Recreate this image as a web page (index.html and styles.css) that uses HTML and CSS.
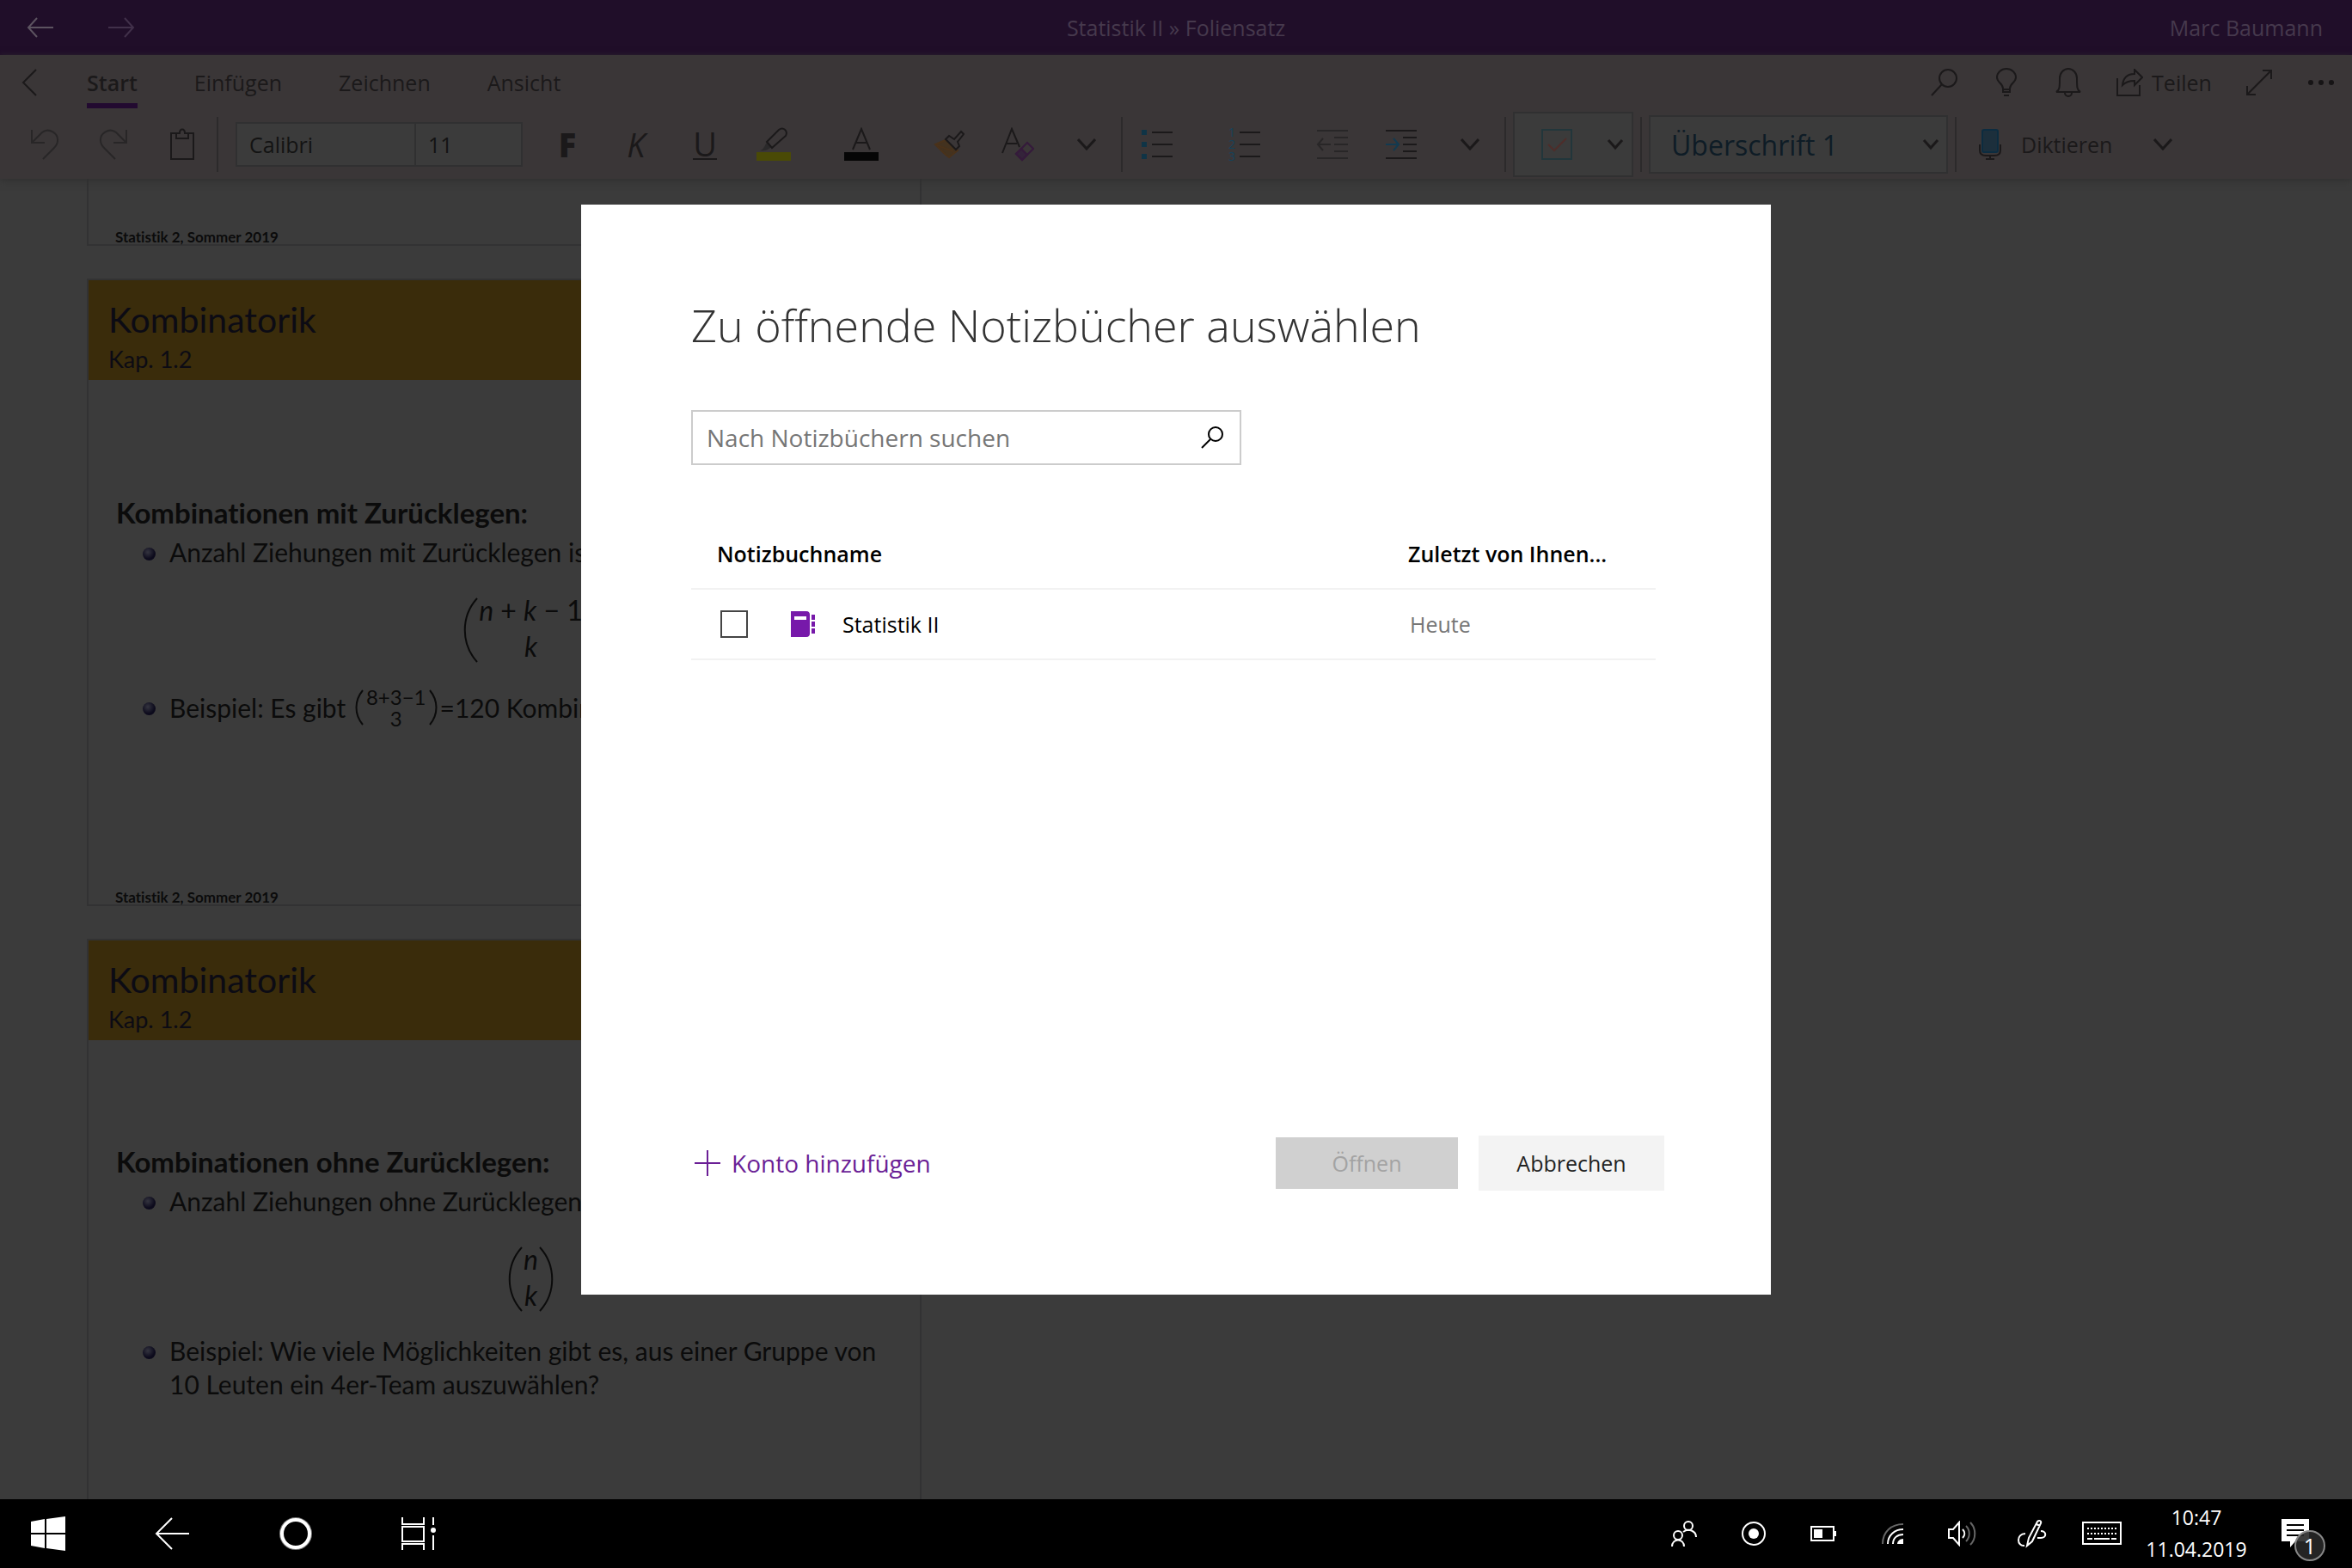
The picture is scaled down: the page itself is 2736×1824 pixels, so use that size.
FILE: index.html
```html
<!DOCTYPE html>
<html lang="de">
	<head>
		<meta charset="UTF-8">
		<meta name="viewport" content="width=device-width, initial-scale=1">
		<title>Statistik II » Foliensatz</title>
		<link rel="stylesheet" href="styles.css">
	</head>
	<body>
		<div class="app">
			<header class="titlebar">
				<div class="nav">
					<button aria-label="Zurück"><svg width="32" height="24" viewBox="0 0 32 24"><path d="M31 12H2M12 1L2 12l10 11" stroke="#5c5360"/></svg></button>
					<button aria-label="Vorwärts"><svg width="32" height="24" viewBox="0 0 32 24"><path d="M1 12h29M20 1l10 11-10 11" stroke="#41304a"/></svg></button>
				</div>
				<div class="doc-title">Statistik II » Foliensatz</div>
				<div class="user">Marc Baumann</div>
			</header>

			<div class="ribbon">
				<div class="tabs">
					<button class="tab-back" aria-label="Menü"><svg width="20" height="32" viewBox="0 0 20 32"><path d="M18 1L3 16l15 15"/></svg></button>
					<button class="tab active">Start</button>
					<button class="tab">Einfügen</button>
					<button class="tab">Zeichnen</button>
					<button class="tab">Ansicht</button>
					<div class="actions">
						<button class="act" aria-label="Suchen"><svg width="32" height="32" viewBox="0 0 32 32"><circle cx="20" cy="11" r="10"/><path d="M13 18L1 31"/></svg></button>
						<button class="act" aria-label="Tipps"><svg width="24" height="34" viewBox="0 0 24 34"><path d="M8 24c0-6-7-7-7-13a11 10 0 0 1 22 0c0 6-7 7-7 13v4H8zM8 25h8M9 32h6"/></svg></button>
						<button class="act" aria-label="Benachrichtigungen"><svg width="30" height="34" viewBox="0 0 30 34"><path d="M1 28h28c-4-2-4-6-4-16a10 11 0 0 0-20 0c0 10 0 14-4 16zM11 29a4 4 0 0 0 8 0"/></svg></button>
						<button class="act share"><svg width="32" height="32" viewBox="0 0 32 32"><path d="M2 11v20h26V19M8 19c1-9 6-13 14-13V1l9 9-9 9v-5c-6 0-10 1-14 5z"/></svg>Teilen</button>
						<button class="act" aria-label="Vollbild"><svg width="32" height="32" viewBox="0 0 32 32"><path d="M2 30L30 2M20 2h10v10M2 20v10h10"/></svg></button>
						<button class="act" aria-label="Mehr"><svg width="32" height="8" viewBox="0 0 32 8"><g fill="#161415" stroke="none"><circle cx="4" cy="4" r="3"/><circle cx="16" cy="4" r="3"/><circle cx="28" cy="4" r="3"/></g></svg></button>
					</div>
				</div>

				<div class="tools">
					<button class="tool" aria-label="Rückgängig"><svg class="dim" width="36" height="38" viewBox="0 0 36 38"><path d="M3 2v15h15M3 17L15 5c8-6 19 1 18 10 0 4-3 7-5 9L16 36"/></svg></button>
					<button class="tool" aria-label="Wiederholen"><svg class="dim" width="36" height="38" viewBox="0 0 36 38"><path d="M33 2v15H18M33 17L21 5C13-1 2 6 3 15c0 4 3 7 5 9l12 12"/></svg></button>
					<button class="tool" aria-label="Einfügen"><svg width="30" height="38" viewBox="0 0 30 38"><path d="M8 6H2v30h26V6h-6M8 6h4c0-6 6-6 6 0h4v6H8z"/></svg></button>
					<span class="sep"></span>
					<div class="fontbox">
						<input class="font-name" type="text" value="Calibri" aria-label="Schriftart">
						<input class="font-size" type="text" value="11" aria-label="Schriftgrad">
					</div>
					<button class="tool fmt bold">F</button>
					<button class="tool fmt italic">K</button>
					<button class="tool fmt"><span class="under">U</span></button>
					<button class="tool" aria-label="Hervorheben"><svg width="40" height="40" viewBox="0 0 40 40"><path d="M0 29h40v10H0z" fill="#4a4a06" stroke="none"/><path d="M4 27c5-1 5-6 8-9l5 5c-3 3-7 5-13 4z" fill="#2a292a" stroke="none"/><path d="M12 17L26 3c5-4 11 1 8 7L18 24z"/></svg></button>
					<button class="tool wide" aria-label="Schriftfarbe"><svg width="40" height="40" viewBox="0 0 40 40"><path d="M0 29h40v10H0z" fill="#060606" stroke="none"/><path d="M10 26L20 2l10 24M13 18h14"/></svg></button>
					<button class="tool" aria-label="Format übertragen"><svg width="36" height="36" viewBox="0 0 36 36"><path d="M2 18l12-5 14 12-10 8c-5-3-8-7-16-15z" fill="#43321f" stroke="#4a321a"/><path d="M4 19l19 7" stroke="#4a321a"/><path d="M14 12l4-4 6 4 8-9 3 3-7 9 2 5-4 4z" fill="#3a3637"/></svg></button>
					<button class="tool" aria-label="Formatierung löschen"><svg width="38" height="40" viewBox="0 0 38 40"><path d="M1 30L12 2l9 21M5 19h13"/><path d="M17 31L30 18l7 7-13 13z" stroke="#351a3b"/><path d="M17 31l6-6 7 7-6 6z" fill="#34233a" stroke="#351a3b"/></svg></button>
					<button class="tool" aria-label="Weitere Schriftoptionen"><svg class="chev" width="22" height="14" viewBox="0 0 22 14"><path d="M1 1l10 11L21 1"/></svg></button>
					<span class="sep"></span>
					<button class="tool" aria-label="Aufzählung"><svg width="38" height="36" viewBox="0 0 38 36"><path d="M1 1h6v6H1zM1 15h6v6H1zM1 29h6v6H1z" fill="#0f3446" stroke="none"/><path d="M13 4h24M13 18h24M13 32h24"/></svg></button>
					<button class="tool wide" aria-label="Nummerierung">
						<span class="digits"><span>1</span><span>2</span><span>3</span></span>
						<svg width="25" height="36" viewBox="0 0 25 36"><path d="M0 4h24M0 18h24M0 32h24"/></svg>
					</button>
					<button class="tool" aria-label="Einzug verkleinern"><svg class="dim" width="38" height="36" viewBox="0 0 38 36"><path d="M1 2h36M21 10h16M21 18h16M21 26h16M1 34h36M17 18H2M8 11l-6 7 6 7"/></svg></button>
					<button class="tool" aria-label="Einzug vergrößern"><svg width="38" height="36" viewBox="0 0 38 36"><path d="M1 2h36M21 10h16M21 18h16M21 26h16M1 34h36"/><path d="M1 18h15M10 11l6 7-6 7" stroke="#123a50"/></svg></button>
					<button class="tool" aria-label="Weitere Absatzoptionen"><svg class="chev" width="22" height="14" viewBox="0 0 22 14"><path d="M1 1l10 11L21 1"/></svg></button>
					<span class="sep"></span>
					<div class="tagbox">
						<button class="tag" aria-label="Aufgabe"><svg width="36" height="36" viewBox="0 0 36 36"><path d="M1 1h34v34H1z" stroke="#22363b"/><path d="M8 18l7 7L29 11" stroke="#4e2d2a"/></svg></button>
						<button class="tag-more" aria-label="Weitere Kategorien"><svg class="chev" width="20" height="14" viewBox="0 0 20 14"><path d="M2 2l8 9 8-9"/></svg></button>
					</div>
					<span class="sep"></span>
					<div class="stylebox">
						<select aria-label="Formatvorlage"><option>Überschrift 1</option></select>
						<svg class="chev" width="20" height="14" viewBox="0 0 20 14"><path d="M2 2l8 9 8-9"/></svg>
					</div>
					<span class="sep"></span>
					<button class="tool dictate"><svg width="28" height="38" viewBox="0 0 28 38"><path d="M2 19v7c0 4 3 6 7 6h10c4 0 7-2 7-6v-7M14 32v4M9 36h10"/><rect x="5" y="2" width="18" height="26" rx="2" fill="#1c2f3c" stroke="#0c2c40"/></svg>Diktieren</button>
					<button class="tool" aria-label="Diktieroptionen"><svg class="chev" width="22" height="14" viewBox="0 0 22 14"><path d="M1 1l10 11L21 1"/></svg></button>
				</div>
			</div>

			<main class="canvas">
				<section class="slide slide-tail">
					<p class="slide-foot">Statistik 2, Sommer 2019</p>
				</section>

				<section class="slide">
					<header class="slide-head">
						<h2>Kombinatorik</h2>
						<p>Kap. 1.2</p>
					</header>
					<div class="slide-body">
						<h3>Kombinationen mit Zurücklegen:</h3>
						<ul>
							<li>Anzahl Ziehungen mit Zurücklegen ist
								<div class="formula">
									<svg width="18" height="76" viewBox="0 0 18 76"><path d="M16 1C-3 22-3 54 16 75"/></svg>
									<div class="binom"><span><i>n</i> + <i>k</i> − 1</span><i>k</i></div>
									<svg width="18" height="76" viewBox="0 0 18 76"><path d="M2 1c19 21 19 53 0 74"/></svg>
								</div>
							</li>
							<li class="inline-row">Beispiel: Es gibt&nbsp;
								<svg width="12" height="44" viewBox="0 0 12 44"><path d="M10 2C0 14 0 30 10 42"/></svg>
								<div class="binom small"><span>8+3−1</span><span>3</span></div>
								<svg width="12" height="44" viewBox="0 0 12 44"><path d="M2 2c10 12 10 28 0 40"/></svg>=120 Kombinationen</li>
						</ul>
					</div>
					<p class="slide-foot">Statistik 2, Sommer 2019</p>
				</section>

				<section class="slide">
					<header class="slide-head">
						<h2>Kombinatorik</h2>
						<p>Kap. 1.2</p>
					</header>
					<div class="slide-body">
						<h3>Kombinationen ohne Zurücklegen:</h3>
						<ul>
							<li>Anzahl Ziehungen ohne Zurücklegen
								<div class="formula">
									<svg width="18" height="76" viewBox="0 0 18 76"><path d="M16 1C-3 22-3 54 16 75"/></svg>
									<div class="binom"><i>n</i><i>k</i></div>
									<svg width="18" height="76" viewBox="0 0 18 76"><path d="M2 1c19 21 19 53 0 74"/></svg>
								</div>
							</li>
							<li>Beispiel: Wie viele Möglichkeiten gibt es, aus einer Gruppe von<br>10 Leuten ein 4er-Team auszuwählen?</li>
						</ul>
					</div>
				</section>
			</main>

			<div class="dialog" role="dialog" aria-labelledby="dlg-title">
				<h1 id="dlg-title">Zu öffnende Notizbücher auswählen</h1>
				<div class="search">
					<input type="text" placeholder="Nach Notizbüchern suchen" aria-label="Nach Notizbüchern suchen">
					<button aria-label="Suchen"><svg width="26" height="26" viewBox="0 0 26 26"><circle cx="17" cy="9" r="8"/><path d="M11 15L1 25"/></svg></button>
				</div>
				<table>
					<colgroup>
						<col class="col-check">
						<col class="col-icon">
						<col>
						<col class="col-date">
					</colgroup>
					<thead>
						<tr>
							<th colspan="3">Notizbuchname</th>
							<th>Zuletzt von Ihnen...</th>
						</tr>
					</thead>
					<tbody>
						<tr>
							<td class="check"><input type="checkbox" id="nb1"></td>
							<td class="icon"><svg width="28" height="30" viewBox="0 0 28 30"><path d="M0 0h18c3 0 4 2 4 4v22c0 2-1 4-4 4H0z"/><path d="M24 4h4v6h-4zM24 12h4v6h-4zM24 20h4v6h-4z"/><path d="M4 6h14v4H4z" fill="#fff"/></svg></td>
							<td><label for="nb1">Statistik II</label></td>
							<td class="date">Heute</td>
						</tr>
					</tbody>
				</table>
				<div class="dialog-foot">
					<a class="add" href="#"><svg width="32" height="32" viewBox="0 0 32 32"><path d="M1 16h30M16 1v30"/></svg>Konto hinzufügen</a>
					<button class="btn open" disabled>Öffnen</button>
					<button class="btn cancel">Abbrechen</button>
				</div>
			</div>
		</div>

		<footer class="taskbar">
			<button class="task" aria-label="Start"><svg width="40" height="40" viewBox="0 0 40 40"><path d="M0 6l16-3v16H0zM18 3l22-3v19H18zM0 21h16v16L0 34zM18 21h22v19l-22-3z" fill="#fff" stroke="none"/></svg></button>
			<button class="task" aria-label="Zurück"><svg width="40" height="40" viewBox="0 0 40 40"><path d="M40 20H2M20 2L2 20l18 18"/></svg></button>
			<button class="task" aria-label="Cortana"><svg width="40" height="40" viewBox="0 0 40 40"><circle cx="20" cy="20" r="18" stroke="#777"/><circle cx="20" cy="20" r="16" stroke-width="4"/></svg></button>
			<button class="task" aria-label="Taskansicht"><svg width="42" height="40" viewBox="0 0 42 40"><path d="M1 1v8h25V1M1 12h25v17H1zM1 39v-7h25v7M37 1v9M37 22v17"/><circle cx="37" cy="16" r="3" fill="#fff" stroke="none"/></svg></button>
			<div class="tray">
				<button aria-label="Kontakte"><svg width="30" height="32" viewBox="0 0 30 32"><circle cx="20" cy="7" r="5"/><circle cx="8" cy="18" r="5"/><path d="M1 31c0-10 14-10 14 0M14 14c6-5 15-1 15 6"/></svg></button>
				<button aria-label="Aufnahme"><svg width="30" height="30" viewBox="0 0 30 30"><circle cx="15" cy="15" r="13"/><circle cx="15" cy="15" r="6" fill="#fff" stroke="none"/></svg></button>
				<button aria-label="Akku"><svg width="30" height="18" viewBox="0 0 30 18"><path d="M1 1h26v16H1zM29 6v6"/><path d="M4 4h10v10H4z" fill="#fff" stroke="none"/></svg></button>
				<button aria-label="WLAN"><svg width="26" height="26" viewBox="0 0 26 26"><path d="M1 25C1 11 11 2 25 2" stroke="#666"/><path d="M7 25C7 15 15 8 25 8M13 25c0-7 5-11 12-11"/><path d="M18 25c0-3 3-6 7-6v6z" fill="#fff" stroke="none"/></svg></button>
				<button aria-label="Lautstärke"><svg width="34" height="30" viewBox="0 0 34 30"><path d="M1 10h5l7-8v26l-7-8H1zM17 10c3 3 3 7 0 10"/><path d="M21 6c5 5 5 13 0 18M26 2c7 7 7 19 0 26" stroke="#666"/></svg></button>
				<button aria-label="Stift"><svg width="34" height="34" viewBox="0 0 34 34"><path d="M11 31l2-9L23 3c2-2 5-1 4 2L17 26zM22 6l4 2M9 17c-11 0-10 15-1 14M27 14c7 0 7 8 0 8h-4"/></svg></button>
				<button aria-label="Bildschirmtastatur"><svg width="46" height="28" viewBox="0 0 46 28"><path d="M1 1h44v25H1z"/><path d="M6 8h34M6 14h34" stroke-dasharray="2 2"/><path d="M6 20h6M14 20h18M34 20h6"/></svg></button>
				<div class="clock"><time>10:47</time><time>11.04.2019</time></div>
				<button class="notify" aria-label="Info-Center"><svg width="32" height="34" viewBox="0 0 32 34"><path d="M0 0h32v26H16l-6 7v-7H0z" fill="#fff" stroke="none"/><path d="M6 7h20M6 13h20M6 19h20" stroke="#000"/></svg><span class="badge">1</span></button>
			</div>
		</footer>
	</body>
</html>
```
FILE: styles.css
```css
* {
	box-sizing: border-box;
}
body {
	margin: 0;
	height: 100vh;
	display: flex;
	flex-direction: column;
	overflow: hidden;
	background-color: #000;
	font-family: "Open Sans", "Noto Sans", sans-serif;
	font-size: 25px;
}
button, input, select {
	font: inherit;
	color: inherit;
	background: none;
	border: none;
	border-radius: 0;
	padding: 0;
	margin: 0;
}
h1, h2, h3, p, ul {
	margin: 0;
	padding: 0;
	font-weight: normal;
}
svg {
	display: block;
	flex: none;
	fill: none;
	stroke: currentColor;
	stroke-width: 2;
}
.app {
	position: relative;
	flex: 1;
	min-height: 0;
	display: flex;
	flex-direction: column;
	background-color: #3b3b3b;
}

/* title bar */
.titlebar {
	display: grid;
	grid-template-columns: 1fr auto 1fr;
	align-items: center;
	height: 64px;
	background-color: #200e29;
	color: #46394d;
}
.nav {
	display: flex;
}
.nav button {
	display: grid;
	place-items: center;
	width: 94px;
	height: 64px;
}
.user {
	text-align: right;
	padding-right: 34px;
}

/* ribbon */
.ribbon {
	background-color: #3a3637;
	color: #1b191a;
	box-shadow: 0 2px 8px #303030;
	z-index: 1;
}
.tabs {
	display: flex;
	height: 64px;
}
.tab-back {
	display: grid;
	place-items: center;
	width: 68px;
}
.tab {
	position: relative;
	padding: 0 33px;
}
.tab.active {
	font-weight: 600;
}
.tab.active::after {
	content: "";
	position: absolute;
	left: 33px;
	right: 33px;
	bottom: 2px;
	height: 6px;
	background-color: #220a30;
}
.actions {
	display: flex;
	margin-left: auto;
}
.act {
	display: flex;
	align-items: center;
	justify-content: center;
	gap: 10px;
	width: 72px;
}
.share {
	width: 150px;
}
.tools {
	display: flex;
	align-items: center;
	height: 80px;
	padding-left: 12px;
}
.tool {
	display: flex;
	align-items: center;
	justify-content: center;
	flex: none;
	width: 80px;
	height: 80px;
}
.tool.wide {
	width: 124px;
}
.digits {
	display: flex;
	flex-direction: column;
	width: 13px;
	color: #15425a;
	font-size: 14px;
	line-height: 14px;
	text-align: left;
}
.dim {
	color: #282627;
}
.chev {
	stroke-width: 3;
}
.sep {
	flex: none;
	width: 2px;
	height: 64px;
	background-color: #2c2a2b;
}
.fontbox {
	display: flex;
	width: 334px;
	height: 52px;
	margin: 0 12px 0 20px;
	border: 2px solid #303031;
	background-color: #3b3b3b;
	color: #131313;
}
.font-name {
	width: 208px;
	padding-left: 14px;
	border-right: 2px solid #303031;
}
.font-size {
	flex: 1;
	min-width: 0;
	padding-left: 14px;
}
.fmt {
	font-size: 38px;
	line-height: 40px;
}
.bold {
	font-weight: 800;
}
.italic {
	font-style: italic;
}
.under {
	line-height: 34px;
	border-bottom: 2px solid #1b191a;
}
.tagbox, .stylebox {
	display: flex;
	align-items: center;
	flex: none;
	margin: 0 8px;
	border: 2px solid #303031;
	background-color: #3b3b3b;
}
.tagbox {
	width: 140px;
	height: 76px;
}
.tag, .tag-more {
	display: grid;
	place-items: center;
	width: 98px;
}
.tag-more {
	width: 38px;
}
.stylebox {
	position: relative;
	width: 348px;
	height: 68px;
	color: #0e1c26;
	font-size: 32px;
}
.stylebox select {
	appearance: none;
	width: 100%;
	height: 100%;
	padding-left: 24px;
}
.stylebox svg {
	position: absolute;
	right: 8px;
	color: #1b191a;
}
.dictate {
	justify-content: flex-start;
	width: 200px;
	padding-left: 25px;
	gap: 22px;
}

/* slides on the notebook page */
.canvas {
	flex: 1;
	min-height: 0;
	overflow: hidden;
	padding-left: 101px;
	font-family: Lato, sans-serif;
	font-variant-ligatures: none;
	color: #0b0b0b;
}
.slide {
	display: flex;
	flex-direction: column;
	width: 971px;
	height: 730px;
	margin-bottom: 38px;
	border: 2px solid #323233;
}
.slide-tail {
	height: 78px;
	border-top: none;
}
.slide-head {
	height: 116px;
	padding: 20px 23px 0;
	background-color: #3a2c0b;
	color: #0c0b14;
}
.slide-head h2 {
	font-size: 41px;
	line-height: 52px;
}
.slide-head p {
	font-size: 27px;
	line-height: 40px;
}
.slide-body {
	display: flex;
	flex-direction: column;
	justify-content: center;
	height: 542px;
	padding: 0 32px;
	font-size: 30px;
	line-height: 39px;
}
.slide-body h3 {
	font-size: 33px;
	font-weight: bold;
	margin-bottom: 7px;
}
.slide-body ul {
	list-style: none;
	padding-left: 62px;
}
.slide-body li {
	position: relative;
}
.slide-body li::before {
	content: "";
	position: absolute;
	left: -31px;
	top: 14px;
	width: 15px;
	height: 15px;
	border-radius: 50%;
	background: radial-gradient(circle at 40% 35%, #34343f, #0c0a1c 60%);
}
.slide-body .inline-row::before {
	top: 20px;
}
.formula {
	display: flex;
	justify-content: center;
	margin: 33px 0 24px;
}
.binom {
	display: flex;
	flex-direction: column;
	align-items: center;
	font-size: 32px;
	line-height: 42px;
	margin-top: -6px;
}
.binom.small {
	font-size: 24px;
	line-height: 25px;
	margin: 0;
}
.inline-row {
	display: flex;
	align-items: center;
	gap: 2px;
	height: 52px;
	white-space: nowrap;
}
.slide-foot {
	margin-top: auto;
	padding-left: 31px;
	font-size: 17px;
	line-height: 16px;
	font-weight: bold;
}

/* notebook dialog */
.dialog {
	position: absolute;
	z-index: 2;
	top: 50%;
	left: 50%;
	transform: translate(-50%, -50%);
	display: flex;
	flex-direction: column;
	width: 1384px;
	height: 1268px;
	padding: 102px 124px 121px 128px;
	background-color: #fff;
	color: #000;
}
.dialog h1 {
	font-size: 52px;
	font-weight: 300;
	line-height: 76px;
	color: #333;
}
.search {
	display: flex;
	align-items: center;
	width: 640px;
	height: 64px;
	margin-top: 61px;
	border: 2px solid #ccc;
}
.search input {
	flex: 1;
	height: 100%;
	padding-left: 16px;
	font-size: 28px;
}
.search input::placeholder {
	color: #767676;
	opacity: 1;
}
.search button {
	display: grid;
	place-items: center;
	width: 64px;
	height: 60px;
}
.dialog table {
	width: 1122px;
	margin-top: 62px;
	border-collapse: collapse;
	table-layout: fixed;
}
.dialog th, .dialog td {
	height: 82px;
	padding: 0;
	border-bottom: 2px solid #f2f2f2;
	text-align: left;
}
.dialog th {
	padding-left: 30px;
	font-weight: 600;
}
.col-check {
	width: 116px;
}
.col-icon {
	width: 60px;
}
.col-date {
	width: 318px;
}
.dialog .date {
	padding-left: 32px;
	color: #767676;
}
.check input {
	appearance: none;
	display: block;
	width: 32px;
	height: 32px;
	margin-left: 34px;
	border: 2px solid #444;
}
.icon svg {
	fill: #7719aa;
	stroke: none;
}
.dialog-foot {
	display: flex;
	align-items: center;
	margin-top: auto;
}
.add {
	display: flex;
	align-items: center;
	gap: 12px;
	margin: 0 auto 0 3px;
	font-size: 28px;
	color: #6b1f96;
	text-decoration: none;
}
.btn {
	width: 212px;
	height: 60px;
}
.open {
	background-color: #d0d0d0;
	color: #a3a3a3;
}
.cancel {
	width: 216px;
	height: 64px;
	margin-left: 24px;
	background-color: #f3f3f3;
	color: #222;
}

/* taskbar */
.taskbar {
	display: flex;
	align-items: center;
	height: 80px;
	padding-right: 21px;
	background-color: #000;
	color: #fff;
}
.task {
	display: grid;
	place-items: center;
	width: 144px;
	height: 80px;
}
.task:first-child {
	width: 128px;
	padding-right: 16px;
}
.tray {
	display: flex;
	align-items: center;
	margin-left: auto;
}
.tray button {
	display: grid;
	place-items: center;
	width: 81px;
	height: 80px;
}
.clock {
	display: flex;
	flex-direction: column;
	align-items: center;
	width: 140px;
	font-size: 23px;
	line-height: 37px;
}
.tray .notify {
	position: relative;
	width: 90px;
}
.badge {
	position: absolute;
	left: 44px;
	top: 36px;
	width: 36px;
	height: 36px;
	border: 2px solid #888;
	border-radius: 50%;
	background-color: rgba(40, 40, 40, 0.9);
	font-size: 25px;
	line-height: 32px;
	text-align: center;
}
```
